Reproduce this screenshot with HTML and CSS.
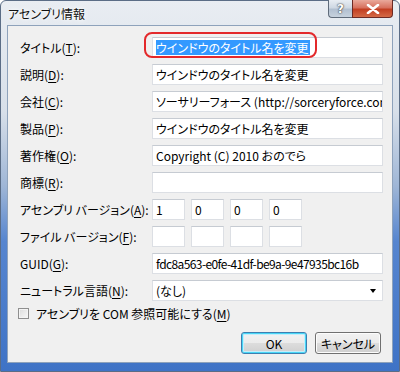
FILE: index.html
```html
<!DOCTYPE html>
<html lang="ja">
<head>
<meta charset="utf-8">
<link rel="stylesheet" href="styles.css">
</head>
<body>
<div class="window">
  <div class="titlebar">
    <span class="title">アセンブリ情報</span>
    <div class="caption-btns">
      <div class="cbtn help">?</div>
      <div class="cbtn close">
        <svg width="14" height="10" viewBox="0 0 14 10"><path d="M2 1 L12 9 M12 1 L2 9" stroke="#fff" stroke-width="2.6" stroke-linecap="round"/></svg>
      </div>
    </div>
  </div>
  <div class="client">
    <div class="form">
      <label class="lbl">タイトル(<u>T</u>):</label>
      <div class="field anchor">
        <div class="tb"><span class="sel">ウインドウのタイトル名を変更</span></div>
        <div class="mark"></div>
      </div>

      <label class="lbl">説明(<u>D</u>):</label>
      <div class="tb">ウインドウのタイトル名を変更</div>

      <label class="lbl">会社(<u>C</u>):</label>
      <div class="tb">ソーサリーフォース (http://sorceryforce.com/)</div>

      <label class="lbl">製品(<u>P</u>):</label>
      <div class="tb">ウインドウのタイトル名を変更</div>

      <label class="lbl">著作権(<u>O</u>):</label>
      <div class="tb">Copyright (C) 2010 おのでら</div>

      <label class="lbl">商標(<u>R</u>):</label>
      <div class="tb"></div>

      <label class="lbl">アセンブリ バージョン(<u>A</u>):</label>
      <div class="ver">
        <div class="tb">1</div><div class="tb">0</div><div class="tb">0</div><div class="tb">0</div>
      </div>

      <label class="lbl">ファイル バージョン(<u>F</u>):</label>
      <div class="ver">
        <div class="tb"></div><div class="tb"></div><div class="tb"></div><div class="tb"></div>
      </div>

      <label class="lbl">GUID(<u>G</u>):</label>
      <div class="tb guid">fdc8a563-e0fe-41df-be9a-9e47935bc16b</div>

      <label class="lbl">ニュートラル言語(<u>N</u>):</label>
      <div class="tb combo"><span>(なし)</span><span class="arrow"></span></div>
    </div>

    <div class="check">
      <span class="box"></span>
      <span>アセンブリを COM 参照可能にする(<u>M</u>)</span>
    </div>

    <div class="buttons">
      <div class="btn default">OK</div>
      <div class="btn">キャンセル</div>
    </div>
  </div>
</div>
</body>
</html>
```
FILE: styles.css
```css
* { box-sizing: border-box; }
html, body { margin: 0; padding: 0; }
body {
  width: 400px;
  height: 372px;
  overflow: hidden;
  font-family: "Noto Sans CJK JP", sans-serif;
  font-feature-settings: "palt";
  font-size: 12px;
  color: #000;
}
.window {
  width: 400px;
  height: 372px;
  border: 1px solid #5b6d86;
  border-radius: 6px 6px 0 0;
  background: linear-gradient(to bottom, #e9edf2 0%, #d7dfe9 30%, #9fb6d6 50%, #5685cf 65%, #3f73c6 100%);
  padding: 0 6px 8px 6px;
  display: flex;
  flex-direction: column;
}
.titlebar {
  height: 24px;
  display: flex;
  align-items: flex-start;
  justify-content: space-between;
}
.title {
  padding-top: 4px;
  padding-left: 1px;
  font-size: 12px;
  color: #111;
  text-shadow: 0 0 6px #fff, 0 0 3px #fff;
}
.caption-btns {
  display: flex;
  margin-top: -1px;
}
.cbtn {
  height: 18px;
  border: 1px solid #5f6b7a;
  border-top: none;
  display: flex;
  align-items: center;
  justify-content: center;
}
.help {
  width: 24px;
  border-radius: 0 0 0 4px;
  border-right: none;
  background: linear-gradient(to bottom, #e8edf3 0%, #cfd8e3 45%, #b2c0d1 55%, #c7d2de 100%);
  color: #fff;
  font-family: "DejaVu Sans", sans-serif;
  font-weight: bold;
  font-size: 12px;
  text-shadow: 0 0 2px #333, 0 0 1px #333;
}
.close {
  width: 41px;
  border-radius: 0 0 4px 0;
  background: linear-gradient(to bottom, #e9a99b 0%, #d7715e 45%, #c23f22 55%, #d46a46 100%);
  border-color: #6c2a24;
}
.client {
  flex: 1;
  background: #f0f0f0;
  border: 1px solid #8ea2bb;
  display: flex;
  flex-direction: column;
  padding: 11px 9px 0 12px;
}
.form {
  display: grid;
  grid-template-columns: 132px 231px;
  grid-auto-rows: 21px;
  row-gap: 6px;
}
.lbl {
  display: flex;
  align-items: center;
  white-space: nowrap;
}
u { text-underline-offset: 2px; }
.tb {
  height: 21px;
  background: #fff;
  border: 1px solid #dcdfe4;
  border-top-color: #c6cbd2;
  padding: 0 2px 0 3px;
  display: flex;
  align-items: center;
  white-space: nowrap;
  overflow: hidden;
  font-size: 12px;
}
.guid { letter-spacing: -0.6px; }
.anchor { position: relative; }
.sel {
  background: #3399ff;
  color: #fff;
  line-height: 15px;
  height: 15px;
  display: inline-flex;
  align-items: center;
  padding-right: 1px;
}
.mark {
  position: absolute;
  left: -8px;
  top: -5px;
  width: 173px;
  height: 26px;
  border: 2px solid #e3292b;
  border-radius: 8px;
}
.ver {
  display: flex;
  gap: 6px;
}
.ver .tb { width: 33px; }
.combo {
  justify-content: space-between;
}
.arrow {
  width: 0;
  height: 0;
  border-left: 3px solid transparent;
  border-right: 3px solid transparent;
  border-top: 4px solid #000;
  margin-right: 4px;
}
.check {
  display: flex;
  align-items: center;
  gap: 7px;
  margin-top: 6px;
  margin-left: -2px;
  height: 12px;
}
.check .box {
  width: 11px;
  height: 11px;
  border: 1px solid #8f8f8f;
  background: linear-gradient(135deg, #dcdcdc, #f8f8f8);
  box-shadow: inset 0 0 0 1px #f4f4f4;
}
.buttons {
  display: flex;
  justify-content: flex-end;
  gap: 8px;
  margin-top: 13px;
  margin-right: 2px;
}
.btn {
  width: 66px;
  height: 22px;
  border: 1px solid #707070;
  border-radius: 3px;
  background: linear-gradient(to bottom, #f2f2f2 0%, #ebebeb 49%, #dddddd 50%, #cfcfcf 100%);
  box-shadow: inset 0 0 0 1px #fcfcfc;
  display: flex;
  align-items: center;
  justify-content: center;
  font-size: 12px;
}
.btn.default {
  border-color: #3c7fb1;
  box-shadow: inset 0 0 0 1px #48d6f6, inset 0 0 0 2px #c4edfb;
}
```
